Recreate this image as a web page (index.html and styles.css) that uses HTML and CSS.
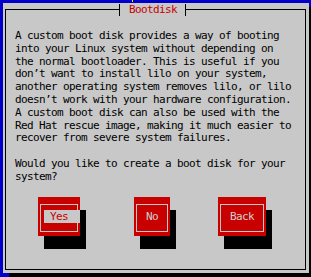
FILE: index.html
```html
<!DOCTYPE html>
<html lang="en">
<head>
    <meta charset="UTF-8">
    <title>Bootdisk</title>
    <link rel="stylesheet" href="styles.css">
</head>
<body>

<div class="screen">
    <span class="cursor"></span>
    <div class="window">
        <div class="title">Bootdisk</div>
        <div class="frame">
            <p class="message">A custom boot disk provides a way of booting
into your Linux system without depending on
the normal bootloader. This is useful if you
don’t want to install lilo on your system,
another operating system removes lilo, or lilo
doesn’t work with your hardware configuration.
A custom boot disk can also be used with the
Red Hat rescue image, making it much easier to
recover from severe system failures.

Would you like to create a boot disk for your
system?</p>
            <div class="buttons">
                <div class="btn btn-yes focused"><span class="label">Yes</span></div>
                <div class="btn btn-no"><span class="label">No</span></div>
                <div class="btn btn-back"><span class="label">Back</span></div>
            </div>
        </div>
    </div>
</div>

</body>
</html>
```

FILE: styles.css
```css
body {
    margin: 0;
    padding: 0;
    background-color: #0000c8;
    font-family: "DejaVu Sans Mono", "Liberation Mono", monospace;
    font-size: 11px;
    letter-spacing: -0.62px;
    color: #000;
    overflow: hidden;
}
.screen {
    position: relative;
    width: 311px;
    height: 277px;
    padding: 3px 0 0 3px;
    box-sizing: border-box;
    overflow: hidden;
}
/* stray yellow mark from the root line */
.cursor {
    position: absolute;
    left: 132px;
    top: 0;
    width: 1px;
    height: 2px;
    background-color: #e8e800;
}
.window {
    position: relative;
    width: 306px;
    height: 270px;
    padding: 6px 3px 3px 2px;
    box-sizing: border-box;
    background-color: #c8c8c8;
    box-shadow: 6px 4px 0 #000;
}
.frame {
    height: 100%;
    box-sizing: border-box;
    border: 1px solid #000;
}
.title {
    position: absolute;
    left: 116px;
    top: 1px;
    height: 12px;
    line-height: 12px;
    padding: 0 8px 0 9px;
    border-left: 1px solid #000;
    border-right: 1px solid #000;
    background-color: #c8c8c8;
    color: #c80000;
}
.message {
    margin: 20px 0 0 9px;
    line-height: 12.8px;
    white-space: pre;
}
.buttons {
    display: flex;
    margin-top: 13px;
    padding-left: 32px;
}
.btn {
    position: relative;
    height: 39px;
    background-color: #c80000;
    box-shadow: 6px 13px 0 #000;
}
.btn::after {
    content: "";
    position: absolute;
    left: 2px;
    right: 2px;
    top: 7px;
    bottom: 4px;
    border: 1px solid #c8c8c8;
}
.btn-yes { width: 42px; }
.btn-no { width: 36px; margin-left: 54px; }
.btn-back { width: 48px; margin-left: 48px; }
.label {
    display: block;
    margin: 13px 0 0 6px;
    padding-left: 6px;
    height: 13px;
    line-height: 13px;
    color: #d0d0d0;
}
.focused .label {
    background-color: #c8c8c8;
    color: #c80000;
}
```
